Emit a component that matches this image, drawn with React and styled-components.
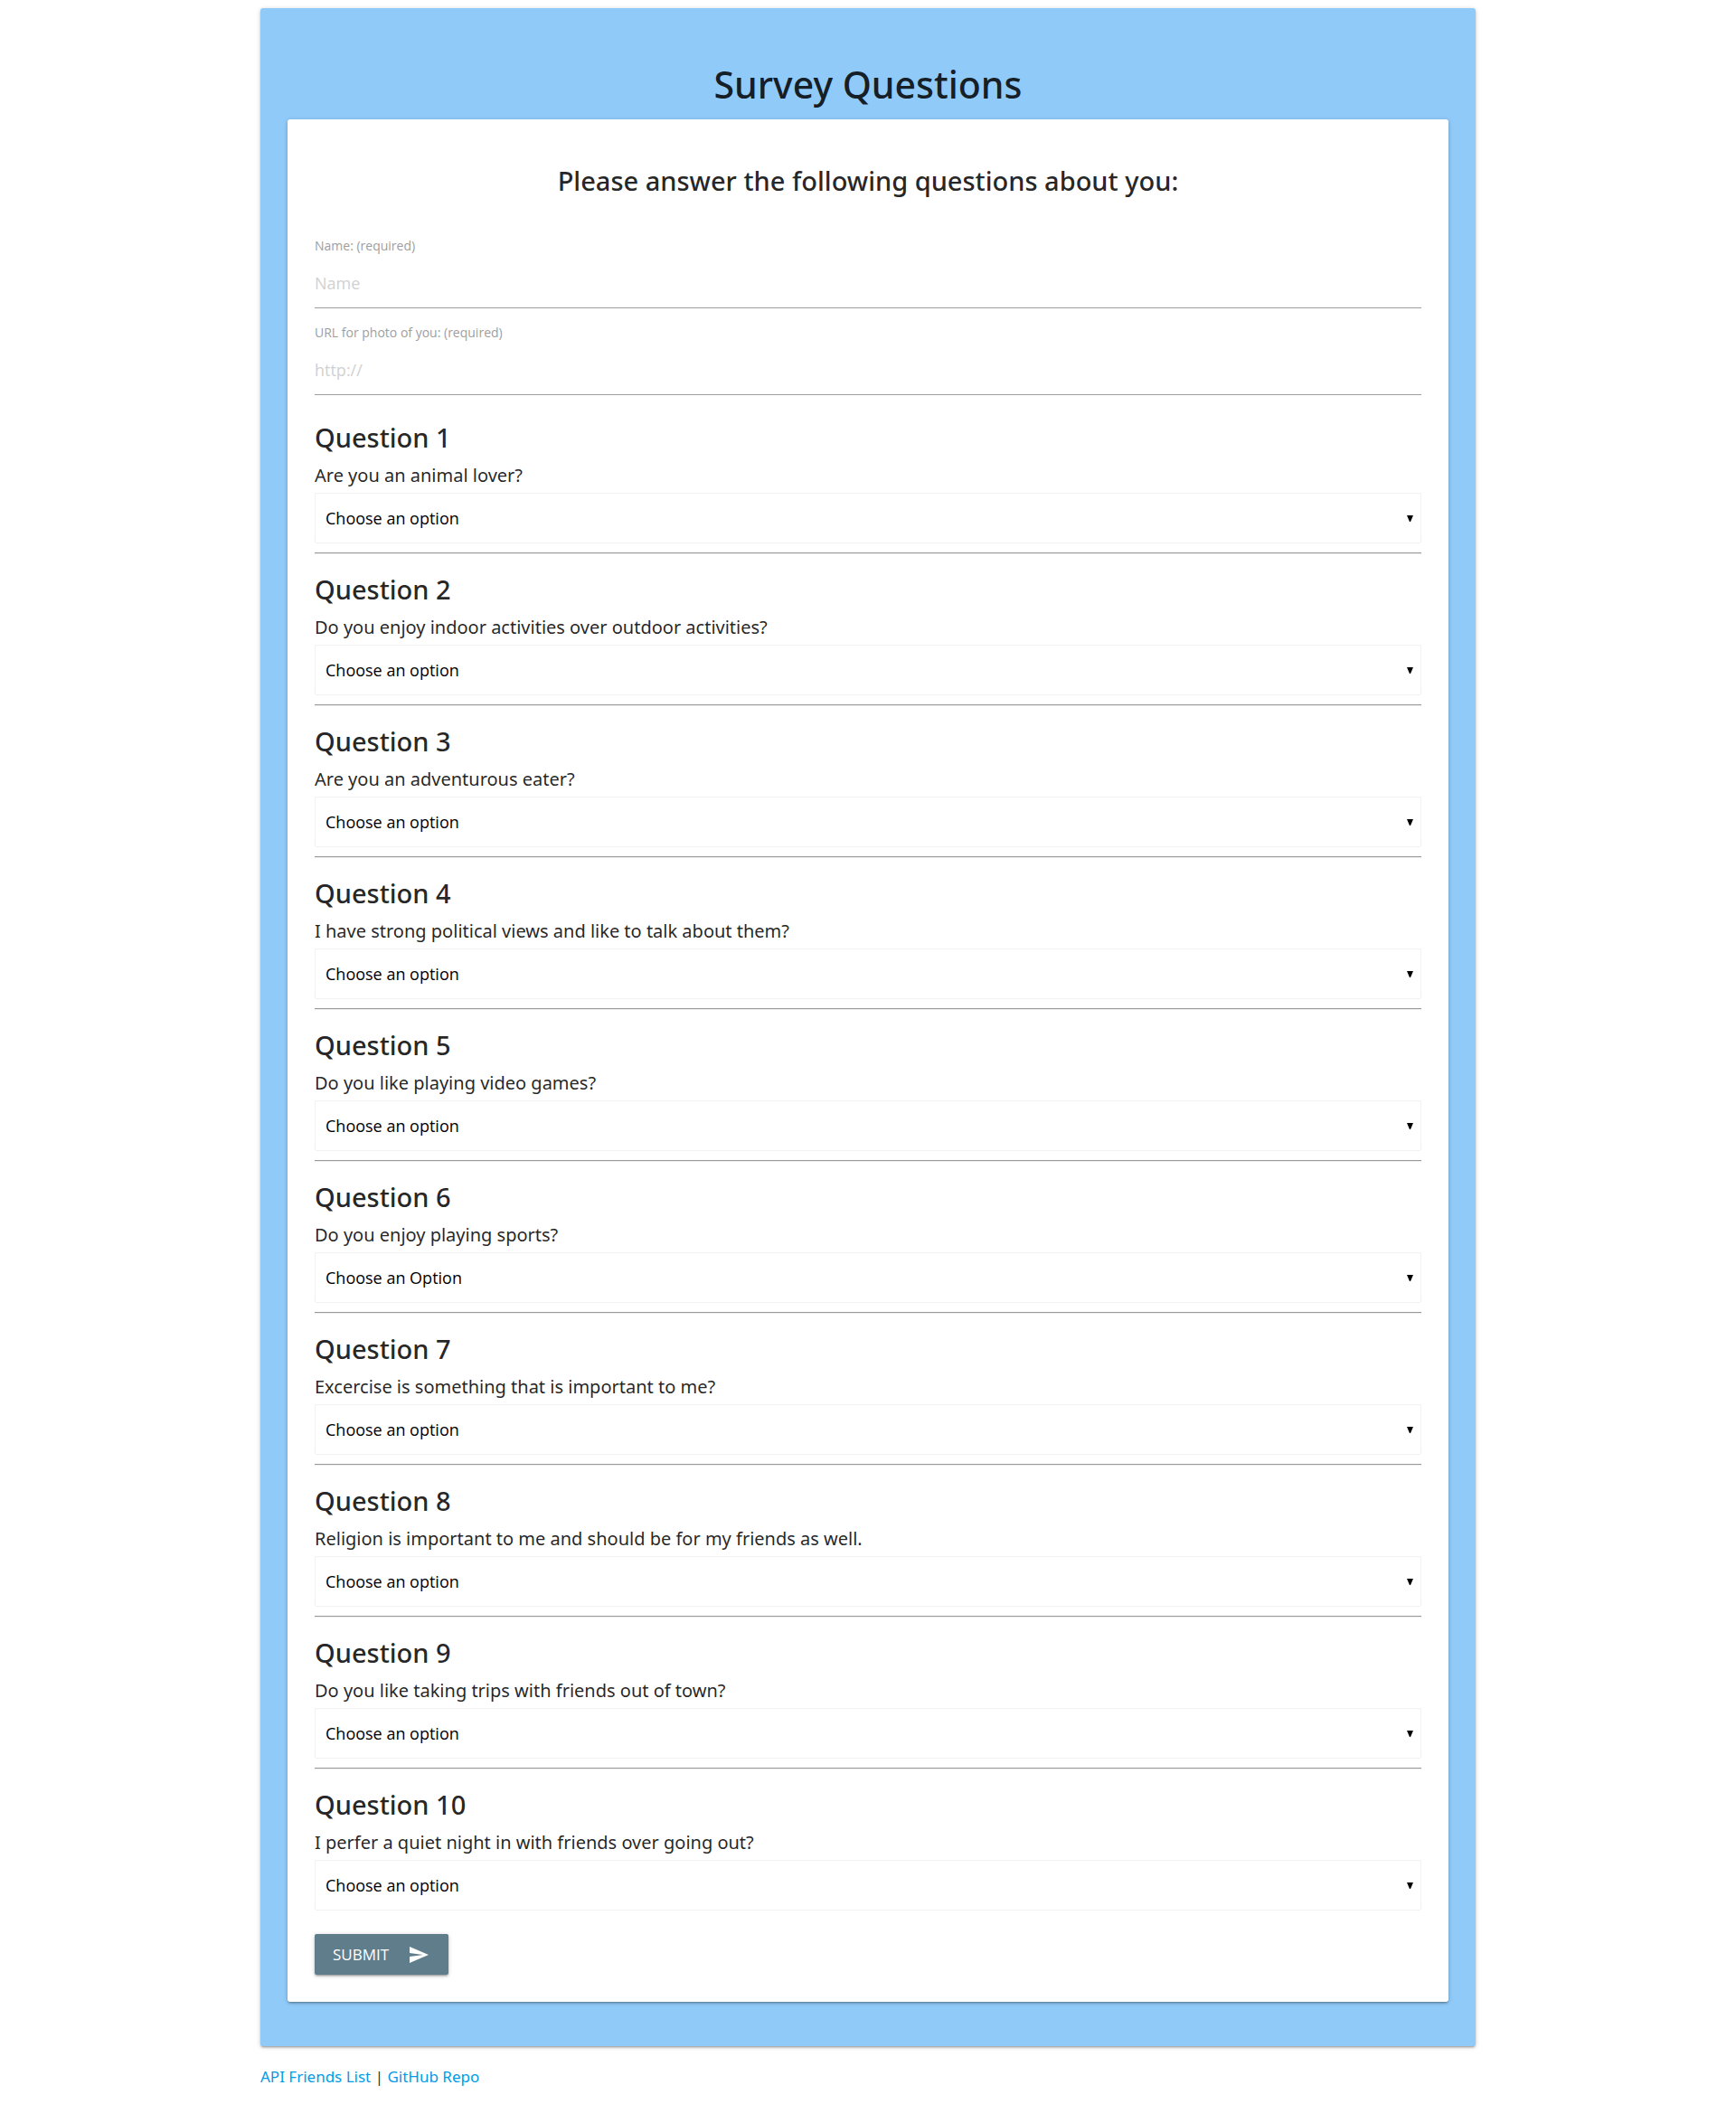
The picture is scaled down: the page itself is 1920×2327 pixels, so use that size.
import React from 'react';
import styled, { createGlobalStyle } from 'styled-components';

const GlobalStyle = createGlobalStyle`
  *, *::before, *::after { box-sizing: border-box; }
  body {
    margin: 0;
    background: #fff;
    color: rgba(0, 0, 0, 0.87);
    font-family: "Open Sans", "Noto Sans", sans-serif;
    font-size: 18px;
    line-height: 27px;
  }
  h1, h2, h3, p { margin: 0; }
`;

const elevation = `
  box-shadow: 0 2px 2px 0 rgba(0, 0, 0, 0.14),
    0 3px 1px -2px rgba(0, 0, 0, 0.12),
    0 1px 5px 0 rgba(0, 0, 0, 0.2);
`;

const Container = styled.div`
  width: 70%;
  margin: 0 auto;
  padding: 9px 0 17px;
`;

const Panel = styled.main`
  padding: 61px 30px 49px;
  border-radius: 3px;
  background: #90caf9;
  ${elevation}
`;

const Title = styled.h1`
  margin-bottom: 16px;
  font: 500 41px/46px "Noto Sans", sans-serif;
  text-align: center;
`;

const Card = styled.form`
  display: flex;
  flex-direction: column;
  padding: 52px 30px 30px;
  border-radius: 3px;
  background: #fff;
  ${elevation}
`;

const Heading = styled.h2`
  margin-bottom: 46px;
  font: 500 29px/32px "Noto Sans", sans-serif;
  text-align: center;
`;

const Fields = styled.div`
  display: grid;
  gap: 17px;
  margin-bottom: 31px;
`;

const Field = styled.div`
  display: grid;
  gap: 3px;
`;

const FieldLabel = styled.label`
  color: #9e9e9e;
  font-size: 14px;
  line-height: 20px;
`;

const TextInput = styled.input`
  width: 100%;
  height: 56px;
  padding: 0;
  border: 0;
  border-bottom: 1px solid #9e9e9e;
  outline: none;
  background: transparent;
  font: inherit;

  &::placeholder { color: #d1d1d1; opacity: 1; }
  &:focus { border-bottom-color: #26a69a; }
`;

const Question = styled.section`
  display: flex;
  flex-direction: column;
`;

const QuestionTitle = styled.h3`
  margin-bottom: 11px;
  font: 500 29px/32px "Noto Sans", sans-serif;
`;

const QuestionText = styled.label`
  margin-bottom: 4px;
  font: 400 20px/30px "Noto Sans", sans-serif;
`;

const SelectBox = styled.div`
  position: relative;
  display: flex;
`;

const Select = styled.select`
  appearance: none;
  width: 100%;
  height: 56px;
  padding: 0 30px 0 11px;
  border: 1px solid #f2f2f2;
  border-radius: 2px;
  background: rgba(255, 255, 255, 0.9);
  color: #000;
  font: inherit;
`;

const Arrow = styled.svg`
  position: absolute;
  top: 25px;
  right: 9px;
  width: 7px;
  height: 7px;
  pointer-events: none;
`;

const Divider = styled.hr`
  width: 100%;
  height: 2px;
  margin: 10px 0 23px;
  border: 0;
  border-top: 1px solid #9a9a9a;
  border-bottom: 1px solid #eee;
`;

const SubmitButton = styled.button`
  display: flex;
  align-items: center;
  align-self: flex-start;
  gap: 21px;
  height: 45px;
  margin-top: 26px;
  padding: 0 21px 0 20px;
  border: 0;
  border-radius: 2px;
  background: #607d8b;
  color: #fff;
  font: inherit;
  font-size: 17px;
  text-transform: uppercase;
  cursor: pointer;
  ${elevation}
`;

const Footer = styled.footer`
  margin-top: 20px;
  font: 400 17px/27px "Noto Sans", sans-serif;
`;

const FooterLink = styled.a`
  color: #039be5;
  text-decoration: none;
`;

const questions = [
  { text: 'Are you an animal lover?' },
  { text: 'Do you enjoy indoor activities over outdoor activities?' },
  { text: 'Are you an adventurous eater?' },
  { text: 'I have strong political views and like to talk about them?' },
  { text: 'Do you like playing video games?' },
  { text: 'Do you enjoy playing sports?', prompt: 'Choose an Option' },
  { text: 'Excercise is something that is important to me?' },
  { text: 'Religion is important to me and should be for my friends as well.' },
  { text: 'Do you like taking trips with friends out of town?' },
  { text: 'I perfer a quiet night in with friends over going out?' },
];

function SurveyQuestion({ number, text, prompt = 'Choose an option' }) {
  const id = `question-${number}`;
  return (
    <Question>
      <QuestionTitle>Question {number}</QuestionTitle>
      <QuestionText htmlFor={id}>{text}</QuestionText>
      <SelectBox>
        <Select id={id} defaultValue="">
          <option value="">{prompt}</option>
        </Select>
        <Arrow viewBox="0 0 7 7" aria-hidden="true">
          <path d="M0 0h7L4 7H3z" />
        </Arrow>
      </SelectBox>
    </Question>
  );
}

export default function App() {
  return (
    <>
      <GlobalStyle />
      <Container>
        <Panel>
          <Title>Survey Questions</Title>
          <Card onSubmit={(event) => event.preventDefault()}>
            <Heading>Please answer the following questions about you:</Heading>
            <Fields>
              <Field>
                <FieldLabel htmlFor="name">Name: (required)</FieldLabel>
                <TextInput id="name" type="text" placeholder="Name" />
              </Field>
              <Field>
                <FieldLabel htmlFor="photo">URL for photo of you: (required)</FieldLabel>
                <TextInput id="photo" type="text" placeholder="http://" />
              </Field>
            </Fields>
            {questions.map((question, index) => (
              <React.Fragment key={question.text}>
                {index > 0 && <Divider />}
                <SurveyQuestion number={index + 1} {...question} />
              </React.Fragment>
            ))}
            <SubmitButton type="submit">
              Submit
              <svg width="24" height="24" viewBox="0 0 24 24" fill="currentColor" aria-hidden="true">
                <path d="M2.01 21L23 12 2.01 3 2 10l15 2-15 2z" />
              </svg>
            </SubmitButton>
          </Card>
        </Panel>
        <Footer>
          <FooterLink href="#friends">API Friends List</FooterLink> |{' '}
          <FooterLink href="#repo">GitHub Repo</FooterLink>
        </Footer>
      </Container>
    </>
  );
}
